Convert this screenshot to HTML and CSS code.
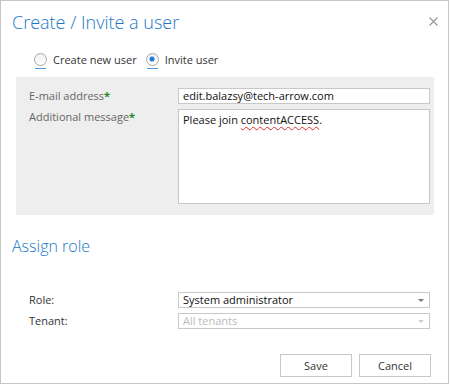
FILE: index.html
```html
<!DOCTYPE html>
<html lang="en">

<head>
    <meta charset="UTF-8">
    <meta name="viewport" content="width=device-width, initial-scale=1.0">
    <title>Create / Invite a user</title>
    <link rel="stylesheet" href="styles.css">
</head>

<body>
    <div class="dialog">
        <div class="dialog-header">
            <h1 class="dialog-title">Create / Invite a user</h1>
            <svg class="dialog-close" width="9" height="9" viewBox="0 0 9 9">
                <path d="M0.5 0.5 L8.5 8.5 M8.5 0.5 L0.5 8.5" stroke="#9a9a9a" stroke-width="1.2" fill="none" />
            </svg>
        </div>
        <div class="mode-row">
            <label class="radio">
                <span class="radio-mark"></span>
                <span class="radio-text">Create new user</span>
            </label>
            <label class="radio checked">
                <span class="radio-mark"></span>
                <span class="radio-text">Invite user</span>
            </label>
        </div>
        <div class="form-panel">
            <div class="form-row">
                <div class="form-label">E-mail address<span class="req">*</span></div>
                <div class="form-input">edit.balazsy@tech-arrow.com</div>
            </div>
            <div class="form-row">
                <div class="form-label">Additional message<span class="req">*</span></div>
                <div class="form-textarea">Please join <span class="typo">contentACCESS</span>.</div>
            </div>
        </div>
        <h2 class="section-title">Assign role</h2>
        <div class="role-form">
            <div class="form-row">
                <div class="form-label dark">Role:</div>
                <div class="form-select">System administrator<span class="caret"></span></div>
            </div>
            <div class="form-row">
                <div class="form-label dark">Tenant:</div>
                <div class="form-select disabled">All tenants<span class="caret"></span></div>
            </div>
        </div>
        <div class="dialog-footer">
            <button class="btn">Save</button>
            <button class="btn">Cancel</button>
        </div>
    </div>
</body>

</html>
```

FILE: styles.css
```css
* {
    margin: 0;
    padding: 0;
    box-sizing: border-box;
}

body {
    font: 11px "Open Sans", "Noto Sans", Arial, sans-serif;
    color: #333;
    background: #fff;
}

.dialog {
    width: 449px;
    height: 384px;
    border: 1px solid #c6c6c6;
    background: #fff;
    display: flex;
    flex-direction: column;
}

.dialog-header {
    display: flex;
    align-items: center;
    justify-content: space-between;
    padding: 5px 10px 0 11px;
    height: 36px;
}

.dialog-title {
    font: 300 18px "Open Sans", "Noto Sans", sans-serif;
    color: #1a78c8;
}

.dialog-close {
    display: block;
}

.mode-row {
    display: flex;
    gap: 9px;
    padding: 14px 0 0 33px;
    height: 40px;
}

.radio {
    display: flex;
    align-items: center;
    gap: 6px;
    height: 16px;
    color: #333;
}

.radio-mark {
    position: relative;
    width: 13px;
    height: 13px;
    border: 1px solid #a8a8a8;
    border-radius: 50%;
    background: linear-gradient(#f0f0f0, #fff);
}

.radio-mark:after {
    content: '';
    position: absolute;
    left: 0;
    right: 0;
    bottom: -4px;
    height: 1px;
    background: #4a9de0;
}

.radio.checked .radio-mark:before {
    content: '';
    position: absolute;
    top: 50%;
    left: 50%;
    transform: translate(-50%, -50%);
    width: 5px;
    height: 5px;
    border-radius: 50%;
    background: #1a78d8;
}

.form-panel {
    margin: 0 14px 0 15px;
    background: #eee;
    padding: 11px 3px 11px 13px;
    display: flex;
    flex-direction: column;
    gap: 5px;
}

.form-row {
    display: flex;
}

.form-label {
    width: 149px;
    color: #666;
    line-height: 16px;
}

.form-label.dark {
    color: #333;
}

.req {
    color: #2a8a2a;
    font-weight: 700;
}

.form-input,
.form-textarea,
.form-select {
    width: 252px;
    border: 1px solid #c8c8c8;
    background: #fff;
    color: #111;
    line-height: 14px;
    padding: 0 4px;
}

.form-textarea {
    height: 95px;
    padding-top: 3px;
}

.typo {
    text-decoration: underline wavy #e03030;
    text-decoration-thickness: 1px;
    text-underline-offset: 2px;
}

.section-title {
    font: 300 16px "Open Sans", "Noto Sans", sans-serif;
    color: #1a78c8;
    padding: 20px 0 0 11px;
    height: 77px;
}

.role-form {
    display: flex;
    flex-direction: column;
    gap: 5px;
    padding-left: 28px;
}

.form-select {
    position: relative;
    height: 16px;
}

.form-select.disabled {
    color: #bbb;
}

.caret {
    position: absolute;
    right: 5px;
    top: 6px;
    border-left: 3px solid transparent;
    border-right: 3px solid transparent;
    border-top: 3px solid #777;
}

.form-select.disabled .caret {
    border-top-color: #ccc;
}

.dialog-footer {
    display: flex;
    justify-content: flex-end;
    gap: 7px;
    padding: 25px 17px 0 0;
}

.btn {
    width: 72px;
    height: 23px;
    border: 1px solid #c8c8c8;
    background: #fff;
    font: 11px "Open Sans", "Noto Sans", sans-serif;
    color: #333;
}
```
